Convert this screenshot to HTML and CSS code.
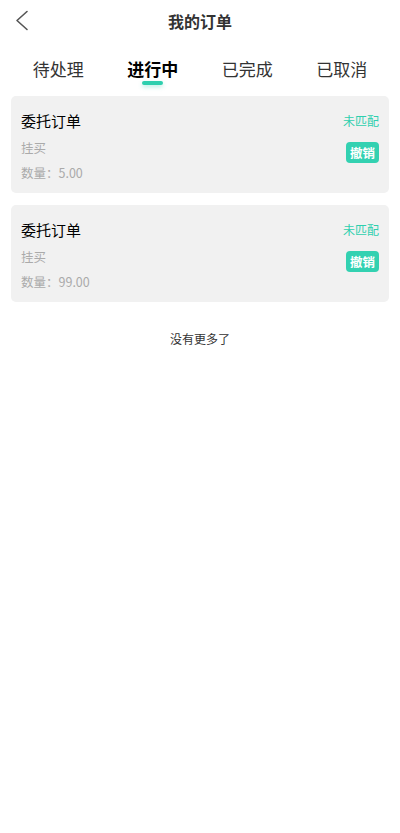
FILE: index.html
```html
<!DOCTYPE html>
<html lang="zh-CN">
<head>
<meta charset="utf-8">
<meta name="viewport" content="width=device-width, initial-scale=1">
<title>我的订单</title>
<link rel="stylesheet" href="styles.css">
</head>
<body>
<header class="nav">
  <button class="nav-back" aria-label="返回">
    <svg width="14" height="22" viewBox="0 0 14 22"><path d="M12 1.5 L2 10.5 L12 19.5" fill="none" stroke="#555" stroke-width="1.6" stroke-linecap="round" stroke-linejoin="round"/></svg>
  </button>
  <h1 class="nav-title">我的订单</h1>
  <span class="nav-side"></span>
</header>

<nav class="tabs">
  <div class="tab"><span class="tab-label">待处理</span><i class="tab-bar"></i></div>
  <div class="tab tab-active"><span class="tab-label">进行中</span><i class="tab-bar"></i></div>
  <div class="tab"><span class="tab-label">已完成</span><i class="tab-bar"></i></div>
  <div class="tab"><span class="tab-label">已取消</span><i class="tab-bar"></i></div>
</nav>

<main class="orders">
  <section class="order">
    <div class="order-info">
      <div class="order-title">委托订单</div>
      <div class="order-sub order-type">挂买</div>
      <div class="order-sub">数量：5.00</div>
    </div>
    <div class="order-side">
      <div class="order-status">未匹配</div>
      <button class="order-cancel">撤销</button>
    </div>
  </section>
  <section class="order">
    <div class="order-info">
      <div class="order-title">委托订单</div>
      <div class="order-sub order-type">挂买</div>
      <div class="order-sub">数量：99.00</div>
    </div>
    <div class="order-side">
      <div class="order-status">未匹配</div>
      <button class="order-cancel">撤销</button>
    </div>
  </section>
  <p class="list-end">没有更多了</p>
</main>
</body>
</html>
```

FILE: styles.css
```css
* { box-sizing: border-box; }

body {
  margin: 0;
  background: #fff;
  font-family: "Noto Sans CJK SC", "Noto Sans", sans-serif;
  color: #333;
}

/* top bar */
.nav {
  height: 42px;
  display: grid;
  grid-template-columns: 44px 1fr 44px;
  align-items: center;
}
.nav-back {
  border: 0;
  background: none;
  padding: 0 0 0 15px;
  height: 42px;
  display: flex;
  align-items: center;
}
.nav-title {
  margin: 0;
  text-align: center;
  font-size: 16px;
  font-weight: 700;
  color: #333;
  line-height: 42px;
}

/* status tabs */
.tabs {
  display: flex;
  padding: 15px 11px 0;
}
.tab {
  flex: 1;
  display: flex;
  flex-direction: column;
  align-items: center;
}
.tab-label {
  font-size: 17px;
  line-height: 24px;
  color: #333;
}
.tab-bar {
  display: block;
  width: 21px;
  height: 4px;
  border-radius: 2px;
}
.tab-active .tab-label {
  font-weight: 700;
  color: #000;
}
.tab-active .tab-bar {
  background: #2ecfae;
  box-shadow: 0 2px 4px rgba(46, 207, 174, 0.35);
}

/* order list */
.orders {
  padding: 11px 11px 0;
}
.order {
  display: flex;
  justify-content: space-between;
  background: #f1f1f1;
  border-radius: 5px;
  padding: 14px 10px 8px;
  height: 97px;
  margin-bottom: 12px;
}
.order-title {
  font-size: 15px;
  line-height: 22px;
  color: #000;
}
.order-sub {
  font-size: 12.5px;
  line-height: 25px;
  color: #aaa;
}
.order-type {
  margin-top: 3px;
}
.order-side {
  display: flex;
  flex-direction: column;
  align-items: flex-end;
}
.order-status {
  font-size: 12px;
  line-height: 22px;
  color: #2ecfae;
}
.order-cancel {
  margin-top: 10px;
  height: 21px;
  width: 33px;
  padding: 0;
  border: 0;
  border-radius: 4px;
  background: #33d1b1;
  color: #fff;
  font-family: inherit;
  font-size: 12.5px;
  font-weight: 700;
  line-height: 21px;
}

.list-end {
  margin: 27px 0 0;
  text-align: center;
  font-size: 12px;
  line-height: 20px;
  color: #333;
}
```
